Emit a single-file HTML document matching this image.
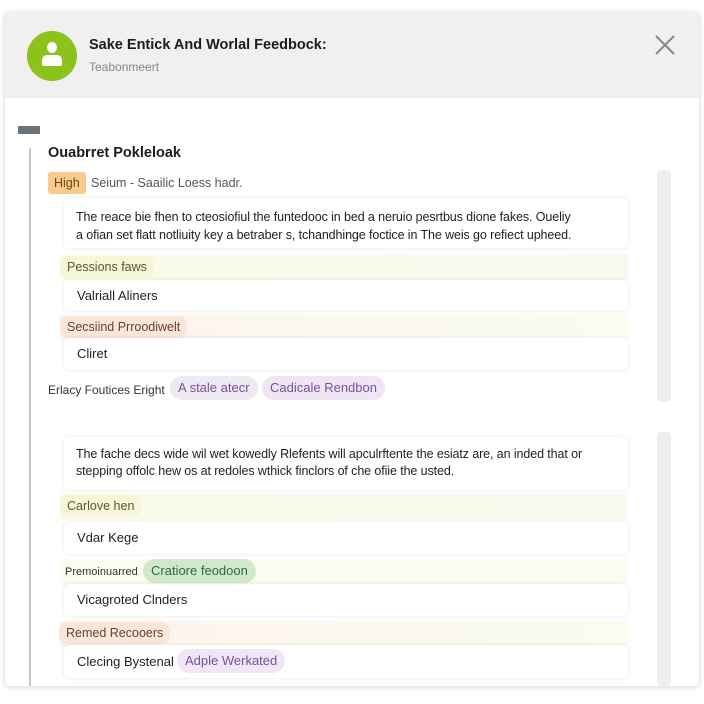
<!DOCTYPE html>
<html><head><meta charset="utf-8"><style>
body{margin:0;width:704px;height:704px;background:#fff;font-family:"Liberation Sans",sans-serif;position:relative;overflow:hidden;color:#222}
.a{position:absolute}
.card{position:absolute;left:5px;top:12px;width:694px;height:674px;background:#fff;box-shadow:0 1px 6px rgba(0,0,0,.18);border-radius:4px;overflow:hidden}
.hdr{position:absolute;left:0;top:0;width:694px;height:86px;background:#f0f0f0}
.box{position:absolute;left:64px;width:564px;background:#fff;box-shadow:0 0 4px rgba(0,0,0,.1);border-radius:5px;font-size:13px;color:#222}
.tag{position:absolute;height:22px;line-height:22px;border-radius:8px;padding:0 7px;font-size:12.5px}
.band{position:absolute;left:60px;width:568px;height:26px}
.chip{position:absolute;height:24px;line-height:24px;border-radius:12px;padding:0 8px;font-size:13px}
.sb{position:absolute;left:657px;width:14px;background:#eeeeee;border-radius:4px}
.lt{padding:10px 12px;line-height:18px;font-size:12.5px;letter-spacing:-0.1px;white-space:nowrap}
</style></head><body>
<div class="card">
<div class="hdr"></div>
<div class="a" style="left:22px;top:19px;width:50px;height:50px;border-radius:50%;background:#8cc21c"></div>
<div class="a" style="left:42px;top:30px;width:10px;height:11px;border-radius:50%;background:#fff"></div>
<div class="a" style="left:37px;top:43px;width:20px;height:11px;border-radius:5px 5px 2px 2px;background:#fff"></div>
<div class="a" style="left:84px;top:25px;font-size:14.5px;font-weight:bold;color:#1c1c1c">Sake Entick And Worlal Feedbock:</div>
<div class="a" style="left:84px;top:48px;font-size:12px;color:#888">Teabonmeert</div>
<svg class="a" style="left:649px;top:22px" width="22" height="22"><path d="M2 2L20 20M20 2L2 20" stroke="#888" stroke-width="2"/></svg>
<div class="a" style="left:13px;top:114px;width:22px;height:8px;background:#6b7278;border-radius:1px"></div>
<div class="a" style="left:24px;top:136px;width:2px;height:540px;background:#c8c8c8"></div>
<div class="a" style="left:43px;top:133px;font-size:14.5px;font-weight:bold;color:#1c1c1c">Ouabrret Pokleloak</div>
<div class="sb" style="left:652px;top:158px;height:232px"></div>
<div class="sb" style="left:652px;top:420px;height:254px"></div>
</div>
<div class="tag" style="left:48px;top:172px;height:22px;background:#f9c98e;padding:0 6px;border-radius:3px;color:#6a4a20">High</div>
<div class="a" style="left:91px;top:176px;font-size:12.5px;color:#555">Seium - Saailic Loess hadr.</div>
<div class="box" style="top:198px;height:50px;padding:0"><div class="lt">The reace bie fhen to cteosiofiul the funtedooc in bed a neruio pesrtbus dione fakes. Oueliy<br>a ofian set flatt notliuity key a betraber s, tchandhinge foctice in The weis go refiect upheed.</div></div>
<div class="band" style="top:254px;background:linear-gradient(90deg,#fbfbe9,#f7fbef)"></div>
<div class="tag" style="left:60px;top:256px;background:#f6f6d9;color:#5a5a2a">Pessions faws</div>
<div class="box" style="top:280px;height:31px;line-height:31px;padding-left:13px;width:551px">Valriall Aliners</div>
<div class="band" style="top:315px;background:linear-gradient(90deg,#fdf4ee,#fafcef)"></div>
<div class="tag" style="left:60px;top:316px;background:#fbe6dc;color:#6a4030">Secsiind Prroodiwelt</div>
<div class="box" style="top:338px;height:32px;line-height:32px;padding-left:13px;width:551px">Cliret</div>
<div class="a" style="left:48px;top:383px;font-size:12px;color:#333">Erlacy Foutices Eright</div>
<div class="chip" style="left:170px;top:376px;background:#efe9f2;color:#7a4fa0">A stale atecr</div>
<div class="chip" style="left:262px;top:376px;background:#f0e6f3;color:#7a4fa0">Cadicale Rendbon</div>
<div class="box" style="top:437px;height:53px"><div class="lt" style="padding:9px 12px;line-height:17px">The fache decs wide wil wet kowedly Rlefents will apculrftente the esiatz are, an inded that or<br>stepping offolc hew os at redoles wthick finclors of che ofiie the usted.</div></div>
<div class="band" style="top:494px;background:linear-gradient(90deg,#fcfbe8,#f8fbef)"></div>
<div class="tag" style="left:60px;top:495px;background:#f8f6da;color:#5a5a2a">Carlove hen</div>
<div class="box" style="top:522px;height:32px;line-height:32px;padding-left:13px;width:551px">Vdar Kege</div>
<div class="band" style="top:559px;background:#fafcf1"></div>
<div class="a" style="left:65px;top:566px;font-size:11px;color:#333">Premoinuarred</div>
<div class="chip" style="left:143px;top:559px;background:#cfeacb;color:#2e6b3a">Cratiore feodoon</div>
<div class="box" style="top:584px;height:32px;line-height:32px;padding-left:13px;width:551px">Vicagroted Clnders</div>
<div class="band" style="top:621px;background:linear-gradient(90deg,#fdf3ec,#fafcef)"></div>
<div class="tag" style="left:59px;top:622px;background:#fbe6dc;color:#6a4030">Remed Recooers</div>
<div class="box" style="top:645px;height:33px;line-height:33px;padding-left:13px;width:551px">Clecing Bystenal</div>
<div class="chip" style="left:177px;top:649px;background:#f0e6f5;color:#7a4fa0">Adple Werkated</div>
</body></html>
